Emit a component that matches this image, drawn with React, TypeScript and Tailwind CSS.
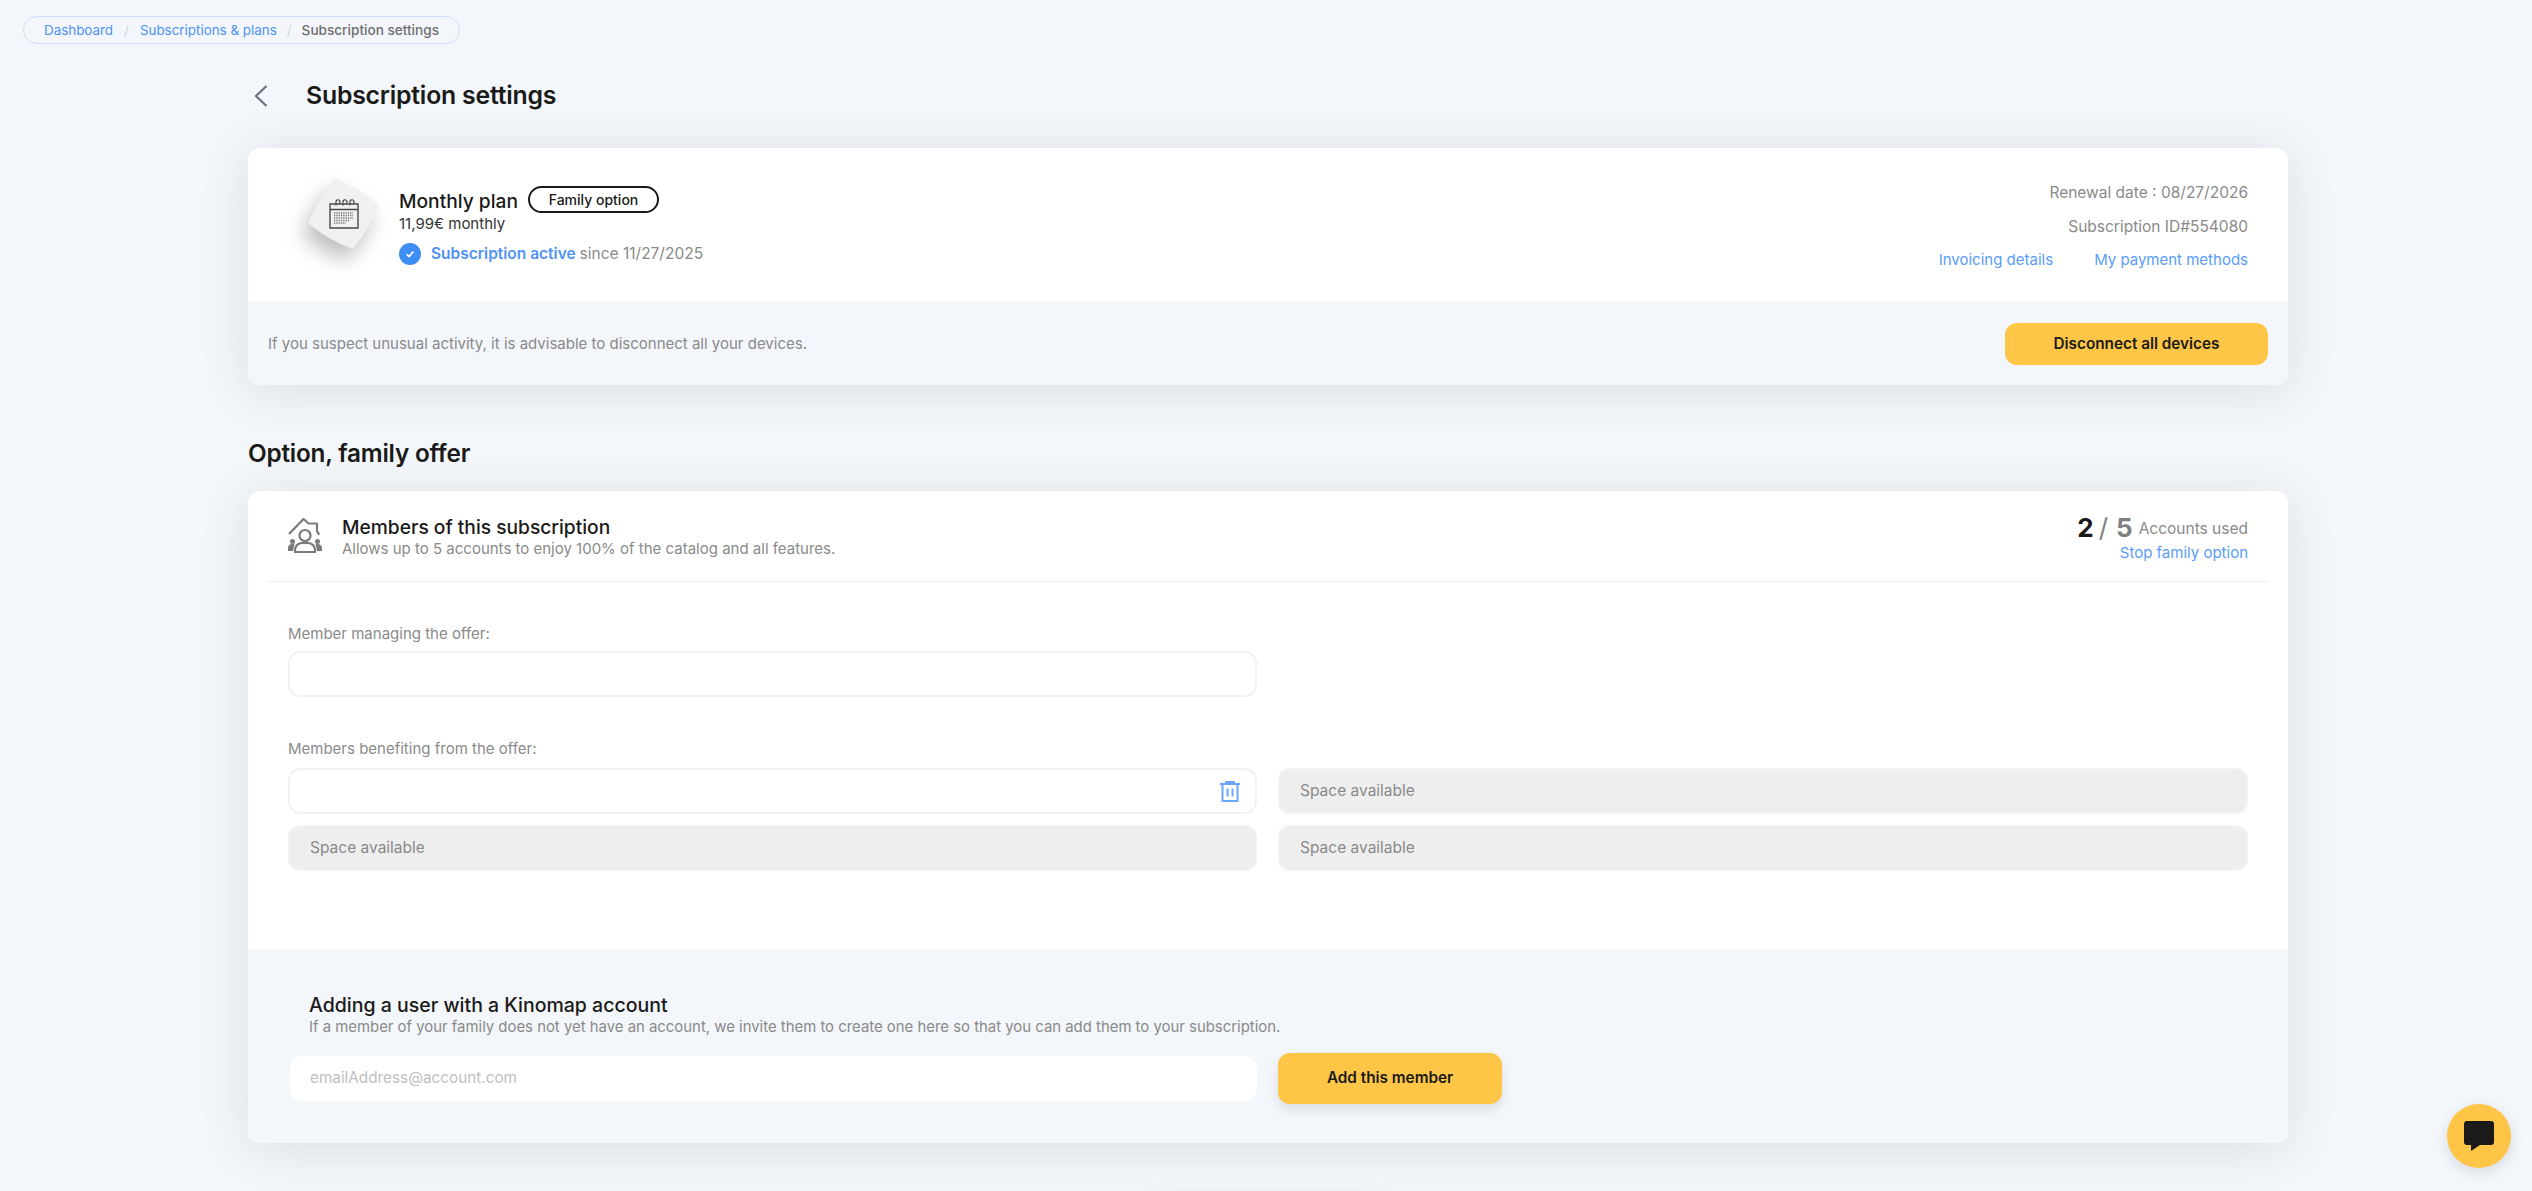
const ChevronIcon = () => (
  <svg viewBox="0 0 14 22" className="h-[22px] w-[14px]" fill="none" stroke="#6d7278" strokeWidth="2.2">
    <path d="M12.500 1 2 11l10.500 10" />
  </svg>
);

const CalendarIcon = () => (
  <svg viewBox="0 0 30 30" className="w-[30px] h-[30px]" fill="none" stroke="#4a4a4a">
    <path d="M1 5h28v24H1z" strokeWidth="1.4" />
    <path d="M1 10.500h28" strokeWidth="1.4" />
    <path d="M7 6.500V3a2 2 0 1 1 3 1.500M14 6.500V3a2 2 0 1 1 3 1.500M21 6.500V3a2 2 0 1 1 3 1.500" strokeWidth="1.2" />
    <path d="M5 14h19M5 16.500h19M5 19h19M5 21.500h16M5 24h12" strokeWidth="1.3" strokeDasharray="1.3 1" stroke="#777" />
  </svg>
);

const Diamond = () => (
  <svg viewBox="0 0 72 72" className="h-[72px] w-[72px] overflow-visible drop-shadow-[-6px_12px_10px_rgba(0,0,0,0.25)]" fill="#f1f1f1">
    <path d="M27 0Q50 10 71 27 62 50 45 71 20 62 0 45 10 22 27 0z" />
  </svg>
);

const FamilyIcon = () => (
  <svg viewBox="0 0 34 36" className="w-[34px] h-[36px]" fill="none" stroke="#7b7b7b" strokeWidth="2.2">
    <path d="M1 17 15.500 2l5 4.500h8.500v8l1.500 1.500v2" strokeLinejoin="round" />
    <circle cx="17" cy="18.500" r="5.500" />
    <path d="M7 35v-2.500a7 7 0 0 1 7-6.500h6a7 7 0 0 1 7 6.500V35z" strokeLinejoin="round" />
    <circle cx="4.500" cy="24.500" r="2.500" fill="#7b7b7b" stroke="none" />
    <circle cx="29.500" cy="24.500" r="2.500" fill="#7b7b7b" stroke="none" />
    <path d="M0 34v-3.500a4.500 4.500 0 0 1 5-3.500h1.500L5 34zM34 34v-3.500a4.500 4.500 0 0 0-5-3.500h-1.500L29 34z" fill="#7b7b7b" stroke="none" />
  </svg>
);

const TrashIcon = () => (
  <svg viewBox="0 0 20 21" className="w-[20px] h-[21px]" fill="none" stroke="#6ba6ff" strokeWidth="2">
    <path d="M0 3h20" />
    <path d="M6 2V1h8v1" strokeWidth="2" />
    <path d="M2.500 3v17h15V3" />
    <path d="M7.500 7.500v8M12.500 7.500v8" />
  </svg>
);

const ChatIcon = () => (
  <svg viewBox="0 0 30 30" className="w-[30px] h-[30px]" fill="#1a1a18">
    <path d="M3 0h24a3 3 0 0 1 3 3v18a3 3 0 0 1-3 3H16l-9 6v-6H3a3 3 0 0 1-3-3V3a3 3 0 0 1 3-3z" />
  </svg>
);

const SpaceField = () => (
  <div className="h-[46px] rounded-xl border-2 border-[#f2f2f2] bg-[#eeeeee] pl-5 flex items-center text-[15.500px] text-[#8a8a8a]">
    Space available
  </div>
);

export default function App() {
  return (
    <div className="relative h-[1191px] overflow-hidden bg-[#f3f6fa] font-['Inter',sans-serif] text-[#1a1a18]">
      <div className="pl-[23px] pt-4">
        <nav className="inline-flex h-[28px] w-[437px] items-center rounded-full border border-[#cfe0fb] pl-5 text-[13.400px] text-[#4e92f5]">
          <span>Dashboard</span>
          <span className="mx-[11px] text-[#cfd6e0]">/</span>
          <span>Subscriptions &amp; plans</span>
          <span className="mx-[10px] text-[#cfd6e0]">/</span>
          <span className="text-[13.600px] font-medium text-[#6f6f6f]">Subscription settings</span>
        </nav>
      </div>

      <div className="ml-[248px] w-[2040px]">
        <div className="mt-[30px] flex h-[44px] items-center pl-[6px]">
          <ChevronIcon />
          <h1 className="ml-[38px] text-[24.800px] font-semibold tracking-[-0.2px]">Subscription settings</h1>
        </div>

        <section className="mt-[30px] overflow-hidden rounded-xl bg-white shadow-[0_6px_50px_rgba(0,0,0,0.1)]">
          <div className="flex h-[154px] justify-between pr-10">
            <div className="flex">
              <div className="relative ml-[96px] mt-[66px] h-0 w-0">
                <div className="absolute -left-[36px] -top-[36px]">
                  <Diamond />
                </div>
                <div className="absolute -left-[15px] -top-[15px]">
                  <CalendarIcon />
                </div>
              </div>
              <div className="ml-[55px] pt-[38px]">
                <div className="flex h-[27px] items-center">
                  <span className="mt-[3px] text-[19.200px] font-medium">Monthly plan</span>
                  <span className="ml-[10px] flex h-[27px] w-[131px] items-center justify-center rounded-full border-2 border-[#1a1a18] text-[14px] font-medium">
                    Family option
                  </span>
                </div>
                <p className="mt-[1px] text-[15px] leading-[20px] text-[#333333]">11,99€ monthly</p>
                <div className="mt-[8px] flex h-[23px] items-center text-[15.500px]">
                  <span className="flex h-[22px] w-[22px] items-center justify-center rounded-full bg-[#3f8ef5]">
                    <svg viewBox="0 0 12 12" className="h-[10px] w-[10px]" fill="none" stroke="#fff" strokeWidth="2">
                      <path d="M2 6.500 5 9l5-6" />
                    </svg>
                  </span>
                  <span className="ml-[10px] font-semibold text-[#4e92f5]">Subscription active</span>
                  <span className="ml-1 text-[#8a8a8a]">since 11/27/2025</span>
                </div>
              </div>
            </div>
            <div className="flex flex-col items-end pt-[33px] text-[15.500px] leading-[24px]">
              <p className="text-[#8a8a8a]">Renewal date : 08/27/2026</p>
              <p className="mt-[10px] text-[#8a8a8a]">Subscription ID#554080</p>
              <div className="mt-[9px] flex gap-[41px] text-[15px] text-[#5a9df8]">
                <a>Invoicing details</a>
                <a>My payment methods</a>
              </div>
            </div>
          </div>
          <div className="flex h-[83px] items-center justify-between bg-[#f3f6fa] pl-5 pr-5">
            <p className="mt-[2px] text-[15px] text-[#8a8a8a]">If you suspect unusual activity, it is advisable to disconnect all your devices.</p>
            <button className="h-[42px] w-[263px] rounded-xl bg-[#ffc546] pt-[2px] text-[15.300px] font-semibold">
              Disconnect all devices
            </button>
          </div>
        </section>

        <h2 className="mt-[52px] text-[24.300px] leading-[32px] font-semibold tracking-[-0.2px]">Option, family offer</h2>

        <section className="mt-[22px] overflow-hidden rounded-xl bg-white shadow-[0_6px_50px_rgba(0,0,0,0.1)]">
          <div className="mx-5 flex h-[91px] justify-between border-b border-[#f2f2f2] pl-5 pr-5">
            <div className="flex pt-[26px]">
              <FamilyIcon />
              <div className="ml-[20px] -mt-[2px]">
                <p className="text-[19.200px] leading-[24px] font-medium">Members of this subscription</p>
                <p className="text-[15px] leading-[20px] text-[#8a8a8a]">Allows up to 5 accounts to enjoy 100% of the catalog and all features.</p>
              </div>
            </div>
            <div className="flex flex-col items-end pt-[20px]">
              <div className="flex h-[32px] items-center">
                <span className="text-[26px] font-bold">2</span>
                <span className="ml-[5px] text-[26px] text-[#808080]">/</span>
                <span className="ml-2 text-[26px] font-bold text-[#808080]">5</span>
                <span className="ml-[6px] mt-1 text-[15.500px] text-[#8a8a8a]">Accounts used</span>
              </div>
              <a className="text-[15px] leading-[20px] text-[#5a9df8]">Stop family option</a>
            </div>
          </div>

          <div className="h-[368px] pl-10 pr-10">
            <p className="pt-[40px] text-[15px] leading-[24px] text-[#8a8a8a]">Member managing the offer:</p>
            <div className="mt-[5px] h-[46px] w-[969px] rounded-xl border-2 border-[#f2f2f2]" />
            <p className="mt-[40px] text-[15px] leading-[24px] text-[#8a8a8a]">Members benefiting from the offer:</p>
            <div className="mt-[7px] grid grid-cols-[969px_970px] gap-x-[21px] gap-y-[11px]">
              <div className="flex h-[46px] items-center justify-end rounded-xl border-2 border-[#f2f2f2] pr-[15px]">
                <TrashIcon />
              </div>
              <SpaceField />
              <SpaceField />
              <SpaceField />
            </div>
          </div>

          <div className="h-[193px] bg-[#f3f6fa] pl-[42px] pt-[43px]">
            <div className="pl-[19px]">
              <p className="text-[19.500px] leading-[24px] font-medium">Adding a user with a Kinomap account</p>
              <p className="text-[14.900px] leading-[20px] text-[#8a8a8a]">If a member of your family does not yet have an account, we invite them to create one here so that you can add them to your subscription.</p>
            </div>
            <div className="mt-[16px] flex items-center gap-[21px]">
              <div className="flex h-[45px] w-[967px] items-center rounded-xl bg-white pl-5 text-[15.300px] text-[#c0c0c0]">emailAddress@account.com</div>
              <button className="h-[51px] w-[224px] rounded-xl bg-[#ffc546] text-[15.300px] font-semibold shadow-[0_6px_12px_rgba(0,0,0,0.1)]">
                Add this member
              </button>
            </div>
          </div>
        </section>

        <div className="mx-auto mt-[57px] h-[40px] w-[240px] rounded-xl bg-white shadow-[0_0_30px_rgba(0,0,0,0.08)]" />
      </div>

      <div className="fixed bottom-[23px] right-[21px] flex h-[64px] w-[64px] items-center justify-center rounded-full bg-[#ffc546] shadow-[0_4px_14px_rgba(0,0,0,0.12)]">
        <ChatIcon />
      </div>
    </div>
  );
}
